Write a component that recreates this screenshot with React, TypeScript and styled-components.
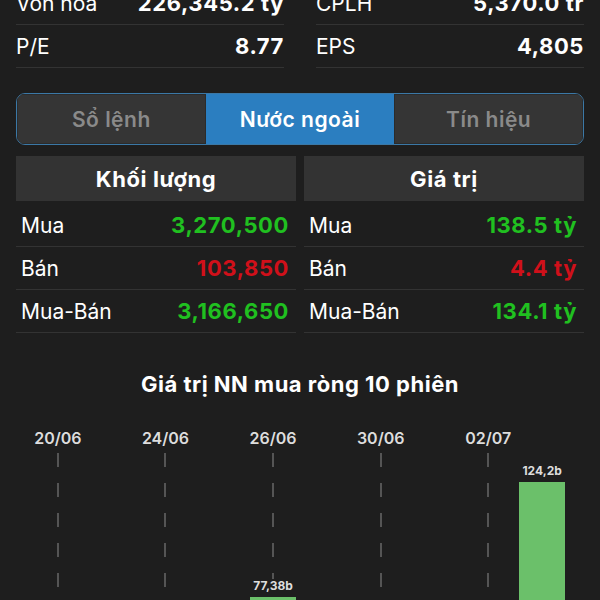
import React from "react";
import styled, { createGlobalStyle } from "styled-components";

const GlobalStyle = createGlobalStyle`
  html, body {
    margin: 0;
    padding: 0;
    background: #1e1e1e;
    font-family: Inter, "Noto Sans", "Liberation Sans", sans-serif;
    color: #ffffff;
    overflow: hidden;
  }
  * { box-sizing: border-box; }
`;

const Page = styled.div`
  padding: 0 16px;
`;

const StatsGrid = styled.div`
  display: grid;
  grid-template-columns: 1fr 1fr;
  column-gap: 32px;
  margin-top: -18px;
`;

const StatRow = styled.div`
  display: flex;
  align-items: center;
  justify-content: space-between;
  height: 43px;
  border-bottom: 1px solid #333333;
  font-size: 21px;
`;

const StatLabel = styled.span`
  font-weight: 400;
  color: #ffffff;
`;

const StatValue = styled.span`
  font-weight: 700;
  font-size: 22px;
  letter-spacing: 0.6px;
  color: #ffffff;
`;

const Tabs = styled.div`
  margin-top: 25px;
  display: grid;
  grid-template-columns: repeat(3, 1fr);
  height: 52px;
  border: 1.5px solid #3b78a6;
  border-radius: 9px;
  overflow: hidden;
  background: #2a2a2a;
`;

const Tab = styled.div<{ $active?: boolean }>`
  display: flex;
  align-items: center;
  justify-content: center;
  font-size: 21px;
  font-weight: 600;
  letter-spacing: 0.5px;
  color: ${(p) => (p.$active ? "#ffffff" : "#8a8a8a")};
  background: ${(p) => (p.$active ? "#2b7ec0" : "#353535")};
  box-shadow: ${(p) => (p.$active ? "none" : "inset 0 0 0 1px #2b2b2b")};
`;

const Tables = styled.div`
  margin-top: 11px;
  display: grid;
  grid-template-columns: 1fr 1fr;
  column-gap: 8px;
`;

const Table = styled.div`
  display: flex;
  flex-direction: column;
`;

const TableHeader = styled.div`
  height: 45px;
  display: flex;
  align-items: center;
  justify-content: center;
  background: #333333;
  font-size: 22px;
  font-weight: 700;
  letter-spacing: 0.6px;
  margin-bottom: 3px;
`;

const TableRow = styled.div`
  display: flex;
  align-items: center;
  justify-content: space-between;
  height: 43px;
  padding: 0 7px 0 5px;
  border-bottom: 1px solid #333333;
  font-size: 21px;
`;

const RowLabel = styled.span`
  color: #ffffff;
`;

const RowValue = styled.span<{ $tone: "up" | "down" }>`
  font-weight: 700;
  font-size: 22px;
  letter-spacing: 0.6px;
  color: ${(p) => (p.$tone === "up" ? "#20c020" : "#d0101a")};
`;

const ChartTitle = styled.div`
  margin-top: 39px;
  text-align: center;
  font-size: 22px;
  line-height: 24px;
  font-weight: 700;
  letter-spacing: 0.5px;
  color: #ffffff;
`;

const Chart = styled.div`
  margin: 32px 15px 0;
  display: grid;
  grid-template-columns: repeat(10, 1fr);
`;

const Column = styled.div`
  display: flex;
  flex-direction: column;
  align-items: center;
`;

const DateLabel = styled.div`
  height: 20px;
  line-height: 20px;
  font-size: 16px;
  font-weight: 600;
  color: #dddddd;
  white-space: nowrap;
`;

const Plot = styled.div<{ $dashed?: boolean }>`
  margin-top: 5px;
  height: 334px;
  width: 100%;
  display: flex;
  flex-direction: column;
  align-items: center;
  justify-content: flex-end;
  background-image: ${(p) =>
    p.$dashed
      ? "linear-gradient(to bottom, #555555 0px, #555555 14px, transparent 14px, transparent 30px)"
      : "none"};
  background-size: 2px 30px;
  background-repeat: repeat-y;
  background-position: center top;
`;

const BarValue = styled.div`
  font-size: 12px;
  line-height: 14px;
  font-weight: 700;
  color: #dddddd;
  margin-bottom: 4px;
  background: #1e1e1e;
  padding: 0 2px;
`;

const Bar = styled.div`
  width: 46px;
  background: #6bc06a;
`;

const stats = [
  ["Vốn hoá", "226,345.2 tỷ"],
  ["CPLH", "5,370.0 tr"],
  ["P/E", "8.77"],
  ["EPS", "4,805"],
];

const volumeRows: [string, string, "up" | "down"][] = [
  ["Mua", "3,270,500", "up"],
  ["Bán", "103,850", "down"],
  ["Mua-Bán", "3,166,650", "up"],
];

const valueRows: [string, string, "up" | "down"][] = [
  ["Mua", "138.5 tỷ", "up"],
  ["Bán", "4.4 tỷ", "down"],
  ["Mua-Bán", "134.1 tỷ", "up"],
];

const sessions = [
  { date: "20/06", value: 12.5 },
  { date: "23/06", value: 35.2 },
  { date: "24/06", value: 18.4 },
  { date: "25/06", value: 5.1 },
  { date: "26/06", value: 77.38 },
  { date: "27/06", value: 42.6 },
  { date: "30/06", value: 20.3 },
  { date: "01/07", value: 45.9 },
  { date: "02/07", value: 31.7 },
  { date: "03/07", value: 124.2 },
];

const PX_PER_UNIT = 305 / 124.2;

const fmt = (v: number) => v.toString().replace(".", ",") + "b";

export default function App() {
  return (
    <>
      <GlobalStyle />
      <Page>
        <StatsGrid>
          {stats.map(([l, v]) => (
            <StatRow key={l}>
              <StatLabel>{l}</StatLabel>
              <StatValue>{v}</StatValue>
            </StatRow>
          ))}
        </StatsGrid>

        <Tabs>
          <Tab>Sổ lệnh</Tab>
          <Tab $active>Nước ngoài</Tab>
          <Tab>Tín hiệu</Tab>
        </Tabs>

        <Tables>
          <Table>
            <TableHeader>Khối lượng</TableHeader>
            {volumeRows.map(([l, v, t]) => (
              <TableRow key={l}>
                <RowLabel>{l}</RowLabel>
                <RowValue $tone={t}>{v}</RowValue>
              </TableRow>
            ))}
          </Table>
          <Table>
            <TableHeader>Giá trị</TableHeader>
            {valueRows.map(([l, v, t]) => (
              <TableRow key={l}>
                <RowLabel>{l}</RowLabel>
                <RowValue $tone={t}>{v}</RowValue>
              </TableRow>
            ))}
          </Table>
        </Tables>

        <ChartTitle>Giá trị NN mua ròng 10 phiên</ChartTitle>

        <Chart>
          {sessions.map((s, i) => {
            const labelled = i % 2 === 0 && i < 9;
            return (
              <Column key={s.date}>
                <DateLabel>{labelled ? s.date : "\u00a0"}</DateLabel>
                <Plot $dashed={labelled}>
                  <BarValue>{fmt(s.value)}</BarValue>
                  <Bar style={{ height: `${Math.round(s.value * PX_PER_UNIT)}px` }} />
                </Plot>
              </Column>
            );
          })}
        </Chart>
      </Page>
    </>
  );
}
